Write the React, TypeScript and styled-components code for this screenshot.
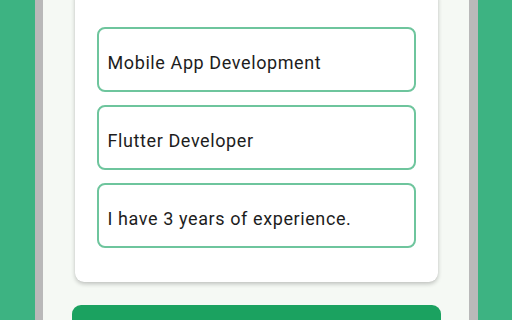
import styled, { createGlobalStyle } from 'styled-components';

const GlobalStyle = createGlobalStyle`
  html, body {
    margin: 0;
    padding: 0;
    height: 100%;
    overflow: hidden;
    background: #3db382;
  }
  body {
    font-family: Roboto, "Noto Sans", sans-serif;
  }
`;

const Screen = styled.div`
  box-sizing: border-box;
  width: 443px;
  height: 320px;
  margin: 0 auto;
  padding: 0 28px 0 29px;
  background: #f5f9f4;
  border-left: 8px solid #b9b9b9;
  border-right: 9px solid #b9b9b9;
  overflow: hidden;
`;

const Card = styled.div`
  margin: -12px 3px 0 3px;
  padding: 39px 22px 34px;
  background: #ffffff;
  border-radius: 9px;
  box-shadow: 0 2px 4px rgba(0, 0, 0, 0.22), 0 0 1px rgba(0, 0, 0, 0.1);
  display: flex;
  flex-direction: column;
  gap: 13px;
`;

const Field = styled.div`
  height: 65px;
  box-sizing: border-box;
  border: 2px solid #6ec59d;
  border-radius: 8px;
  display: flex;
  align-items: center;
  padding: 6px 9px 0;
  font-size: 18px;
  color: #1d1d1d;
  letter-spacing: 0.6px;
`;

const SubmitButton = styled.div`
  margin-top: 23px;
  height: 48px;
  background: #1ba260;
  border-radius: 9px;
`;

const fields = [
  'Mobile App Development',
  'Flutter Developer',
  'I have 3 years of experience.',
];

export default function App() {
  return (
    <>
      <GlobalStyle />
      <Screen>
        <Card>
          {fields.map((f) => (
            <Field key={f}>{f}</Field>
          ))}
        </Card>
        <SubmitButton />
      </Screen>
    </>
  );
}
